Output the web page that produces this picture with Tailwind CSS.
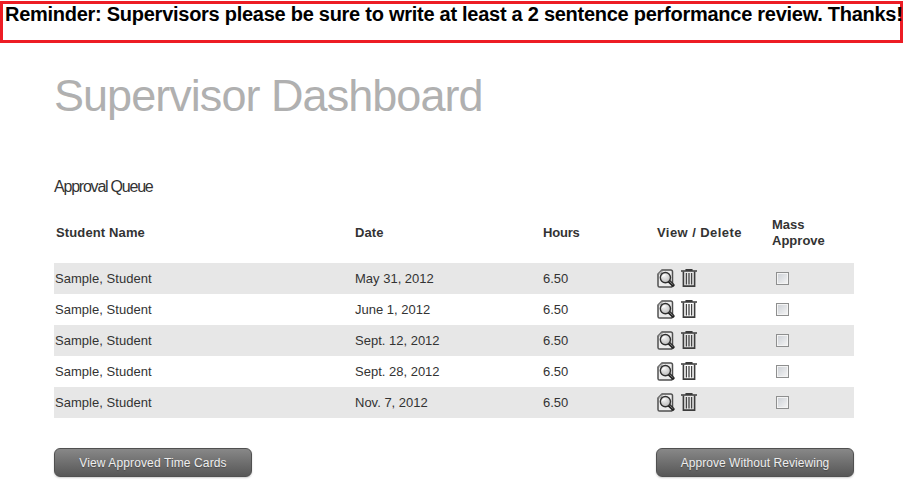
<!DOCTYPE html>
<html lang="en">
<head>
<meta charset="utf-8">
<title>Supervisor Dashboard</title>
<script src="https://cdn.jsdelivr.net/npm/@tailwindcss/browser@4"></script>
</head>
<body class="h-[482px] overflow-hidden bg-white font-['Liberation_Sans',Arial,sans-serif] text-[#333]">
<svg class="absolute h-0 w-0">
  <defs>
    <radialGradient id="lens" cx=".4" cy=".3" r=".8"><stop offset="0" stop-color="#f4f4f4"/><stop offset="1" stop-color="#b4b4b4"/></radialGradient>
  </defs>
  <symbol id="view" viewBox="0 0 18 19">
    <path d="M5 1H13.8Q15.5 1 15.5 2.8V16.2Q15.5 18 13.8 18H2.6Q1 18 1 16.4V5Z" fill="#ececec" stroke="#505050" stroke-width="1.5"/>
    <path d="M1.2 5H5V1.2" fill="#bbb" stroke="#777" stroke-width=".6"/>
    <path d="M11.8 12L16 16.2" stroke="#222" stroke-width="3.2" stroke-linecap="round"/>
    <path d="M12.5 12.3L15.6 15.4" stroke="#999" stroke-width=".9" stroke-linecap="round"/>
    <circle cx="8.4" cy="8.6" r="5.1" fill="url(#lens)" stroke="#2f2f2f" stroke-width="1.4"/>
    <path d="M5.5 8Q6 5.8 8.3 5.7" fill="none" stroke="#fff" stroke-width="1.1"/>
  </symbol>
  <symbol id="trash" viewBox="0 0 16 18">
    <path d="M0 2H16M5.2 1.6V.7H10.8V1.6" fill="none" stroke="#3c3c3c" stroke-width="1.5"/>
    <path d="M2.4 2.5V17.1H13.6V2.5" fill="none" stroke="#3c3c3c" stroke-width="1.6"/>
    <path d="M5.4 4V15.5M8 4V15.5M10.6 4V15.5" stroke="#444" stroke-width="1.3"/>
  </symbol>
</svg>

<div class="mt-px h-[42px] border-[3px] border-[#ed1c24] pl-[2px] text-[20px] leading-[20px] font-bold whitespace-nowrap text-black"><span class="tracking-[-0.267px]">Reminder: Supervisors please be sure to write at least a 2 sentence performance review. Thanks!</span></div>

<main class="ml-[54px] w-[800px]">
  <h1 class="pt-[27px] text-[45px] leading-[52px] tracking-[-0.96px] text-[#b0b0b0]">Supervisor Dashboard</h1>
  <h2 class="mt-[56px] text-[16px] leading-[18px] tracking-[-1.22px]">Approval Queue</h2>

  <table class="mt-[7px] w-full table-fixed border-collapse text-left text-[13px] leading-[16px]">
    <colgroup><col class="w-[300px]"><col class="w-[188px]"><col class="w-[114px]"><col class="w-[116px]"><col></colgroup>
    <thead>
      <tr class="h-[60px]">
        <th class="pl-[2px] tracking-[0.13px]">Student Name</th><th class="pl-px tracking-[0.1px]">Date</th><th class="pl-px tracking-[-0.2px]">Hours</th><th class="pl-px tracking-[0.43px]">View / Delete</th><th class="tracking-[0.02px]">Mass<br>Approve</th>
      </tr>
    </thead>
    <tbody id="rows"></tbody>
  </table>

  <div class="mt-[30px] flex justify-between">
    <button class="h-[29px] w-[198px] rounded-[6px] border border-[#505050] bg-linear-to-b from-[#888] to-[#575757] text-[12px] leading-[27px] tracking-[0.12px] text-[#eee] shadow-[0_1px_2px_rgba(0,0,0,0.2)] text-shadow-[0_1px_1px_rgba(0,0,0,0.3)]"><span class="relative top-px">View Approved Time Cards</span></button>
    <button class="h-[29px] w-[198px] rounded-[6px] border border-[#505050] bg-linear-to-b from-[#888] to-[#575757] text-[12px] leading-[27px] tracking-[0.05px] text-[#eee] shadow-[0_1px_2px_rgba(0,0,0,0.2)] text-shadow-[0_1px_1px_rgba(0,0,0,0.3)]"><span class="relative top-px">Approve Without Reviewing</span></button>
  </div>
</main>
<script>
document.getElementById('rows').innerHTML = ['May 31, 2012', 'June 1, 2012', 'Sept. 12, 2012', 'Sept. 28, 2012', 'Nov. 7, 2012'].map(date => `
  <tr class="h-[31px] odd:bg-[#e7e7e7]">
    <td class="pl-px tracking-[0.04px]">Sample, Student</td><td class="pl-px">${date}</td><td class="pl-px">6.50</td>
    <td class="pl-px"><div class="flex items-start gap-[6px] pb-px"><svg class="h-[19px] w-[18px]"><use href="#view"/></svg><svg class="h-[18px] w-[16px]"><use href="#trash"/></svg></div></td>
    <td class="pl-[4px]"><input type="checkbox" class="block h-[13px] w-[13px] appearance-none border border-[#8e8f8f] bg-linear-to-br from-[#cbcfd5] to-[#f6f6f6] shadow-[inset_0_0_0_1px_#f4f4f4]"></td>
  </tr>`).join('');
</script>
</body>
</html>
